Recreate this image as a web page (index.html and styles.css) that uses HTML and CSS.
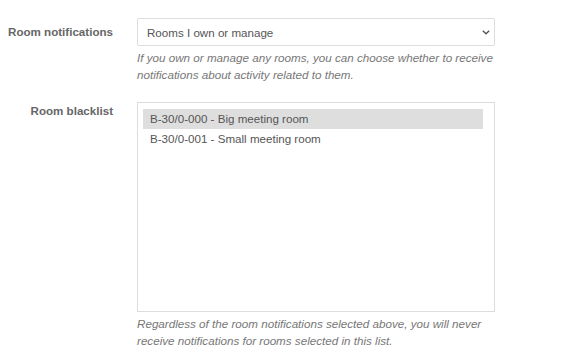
FILE: index.html
```html
<!DOCTYPE html>
<html lang="en">
<head>
    <meta charset="UTF-8">
    <meta name="viewport" content="width=device-width, initial-scale=1.0">
    <title>Room notification settings</title>
    <link rel="stylesheet" href="styles.css">
</head>
<body>
    <form class="settings">
        <div class="row">
            <label class="row-label" for="room-notifications">Room notifications</label>
            <div class="field">
                <div class="select-wrap">
                    <select id="room-notifications" class="select">
                        <option>Rooms I own or manage</option>
                        <option>All rooms</option>
                        <option>None</option>
                    </select>
                    <svg class="chevron" width="8" height="5" viewBox="0 0 8 5">
                        <path d="M0.8 0.8 L4 3.8 L7.2 0.8" fill="none" stroke="#555" stroke-width="1.4"/>
                    </svg>
                </div>
                <p class="help">If you own or manage any rooms, you can choose whether to receive notifications about activity related to them.</p>
            </div>
        </div>
        <div class="row">
            <label class="row-label label-list">Room blacklist</label>
            <div class="field">
                <div class="listbox" role="listbox">
                    <div class="option selected" role="option">B-30/0-000 - Big meeting room</div>
                    <div class="option" role="option">B-30/0-001 - Small meeting room</div>
                </div>
                <p class="help">Regardless of the room notifications selected above, you will never receive notifications for rooms selected in this list.</p>
            </div>
        </div>
    </form>
</body>
</html>
```

FILE: styles.css
```css
body {
    margin: 0;
    background-color: #fff;
    font-family: "Liberation Sans", Arial, sans-serif;
    font-size: 11.6px;
    color: #555;
}

.settings {
    padding-top: 18px;
}

.row {
    display: grid;
    grid-template-columns: 113px 358px;
    column-gap: 24px;
    margin-bottom: 19px;
}

.row-label {
    text-align: right;
    font-weight: bold;
    color: #666;
    padding-top: 7px;
    line-height: 14px;
}

.label-list {
    padding-top: 2px;
}

.select-wrap {
    position: relative;
}

.select {
    display: block;
    width: 100%;
    height: 28px;
    margin: 0;
    padding: 0 24px 0 9px;
    border: 1px solid #ddd;
    border-radius: 2px;
    background: #fff;
    font-family: inherit;
    font-size: 11.6px;
    color: #555;
    -webkit-appearance: none;
    appearance: none;
}

.chevron {
    position: absolute;
    right: 5px;
    top: 12px;
}

.help {
    margin: 3px 0 0;
    font-style: italic;
    font-size: 11.65px;
    line-height: 17px;
    color: #777;
}

.listbox {
    height: 198px;
    padding: 6px 11px 4px 5px;
    border: 1px solid #ddd;
    background: #fff;
}

.option {
    height: 20px;
    line-height: 20px;
    padding-left: 7px;
    color: #555;
}

.option.selected {
    background-color: #dedede;
}
```
